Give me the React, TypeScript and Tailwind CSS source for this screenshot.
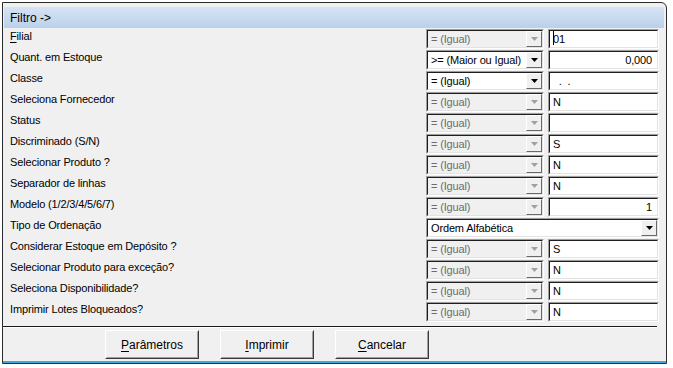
import React from 'react';

type Row = {
  label: string;
  underline?: number;
  op?: string;
  opEnabled?: boolean;
  value?: string;
  align?: 'left' | 'right';
  full?: string;
  caret?: boolean;
};

const rows: Row[] = [
  { label: 'Filial', underline: 0, op: '= (Igual)', value: '01', caret: true },
  { label: 'Quant. em Estoque', op: '>= (Maior ou Igual)', opEnabled: true, value: '0,000', align: 'right' },
  { label: 'Classe', op: '= (Igual)', opEnabled: true, value: '\u00a0\u00a0.\u00a0\u00a0.' },
  { label: 'Seleciona Fornecedor', op: '= (Igual)', value: 'N' },
  { label: 'Status', op: '= (Igual)', value: '' },
  { label: 'Discriminado (S/N)', op: '= (Igual)', value: 'S' },
  { label: 'Selecionar Produto ?', op: '= (Igual)', value: 'N' },
  { label: 'Separador de linhas', op: '= (Igual)', value: 'N' },
  { label: 'Modelo (1/2/3/4/5/6/7)', op: '= (Igual)', value: '1', align: 'right' },
  { label: 'Tipo de Ordenação', full: 'Ordem Alfabética' },
  { label: 'Considerar Estoque em Depósito ?', op: '= (Igual)', value: 'S' },
  { label: 'Selecionar Produto para exceção?', op: '= (Igual)', value: 'N' },
  { label: 'Seleciona Disponibilidade?', op: '= (Igual)', value: 'N' },
  { label: 'Imprimir Lotes Bloqueados?', op: '= (Igual)', value: 'N' },
];

const font = { fontFamily: '"Liberation Sans", Arial, sans-serif' };

function Sunken({ className, children, bg }: { className: string; children?: React.ReactNode; bg: string }) {
  return (
    <div className={`${className} border-t border-l border-[#a0a0a0] border-b border-r border-b-white border-r-white`}>
      <div className={`h-full border-t border-l border-[#1e1e1e] border-b border-r border-b-[#e3e3e3] border-r-[#e3e3e3] ${bg} flex items-center overflow-hidden`}>
        {children}
      </div>
    </div>
  );
}

function DropButton({ disabled }: { disabled?: boolean }) {
  return (
    <div className="ml-auto h-[16px] w-[16px] shrink-0 bg-[#f0f0f0] border-t border-l border-white border-b border-r border-b-[#696969] border-r-[#696969] flex items-center justify-center">
      <svg width="7" height="4" viewBox="0 0 7 4">
        <path d="M0 0h7L3.5 4z" fill={disabled ? '#a0a0a0' : '#000'} />
      </svg>
    </div>
  );
}

function Label({ text, underline }: { text: string; underline?: number }) {
  if (underline === undefined) return <>{text}</>;
  return (
    <>
      {text.slice(0, underline)}
      <span className="underline underline-offset-[2px]">{text[underline]}</span>
      {text.slice(underline + 1)}
    </>
  );
}

function Button({ text, underline }: { text: string; underline: number }) {
  return (
    <div className="w-[94px] h-[29px] border border-t-white border-l-white border-b-[#3a3a3a] border-r-[#3a3a3a] bg-[#f0f0f0]">
      <div className="h-full border border-t-[#f0f0f0] border-l-[#f0f0f0] border-b-[#a0a0a0] border-r-[#a0a0a0] flex items-center justify-center text-[12px] text-black">
        <Label text={text} underline={underline} />
      </div>
    </div>
  );
}

export default function App() {
  return (
    <div className="w-[673px] h-[368px] bg-white" style={font}>
      <div className="ml-[2px] pt-[2px]">
        <div className="w-[665px] h-[362px] bg-[#f0f0f0] border border-[#2c2c2c] rounded-tr-[6px] flex flex-col">
          <div className="flex-1 flex flex-col border-b-2 border-[#3fa8de]">
            <div className="mt-[4px] ml-[1px] mr-[2px] h-[21px] bg-gradient-to-b from-[#d6e4f4] to-[#bad0ea] pl-[6px] flex items-center text-[12px] text-black">
              Filtro -&gt;
            </div>
            <div className="flex flex-col">
              {rows.map((r) => (
                <div key={r.label} className="h-[21px] flex items-start text-[11px] tracking-[-0.15px]">
                  <div className="w-[423px] pl-[7px] pt-[1px] leading-[14px] text-black whitespace-nowrap">
                    <Label text={r.label} underline={r.underline} />
                  </div>
                  {r.full ? (
                    <Sunken className="mt-[1px] w-[233px] h-[20px]" bg="bg-white">
                      <span className="pl-[3px] text-black whitespace-nowrap">{r.full}</span>
                      <DropButton />
                    </Sunken>
                  ) : (
                    <>
                      <Sunken className="mt-[1px] w-[118px] h-[20px]" bg={r.opEnabled ? 'bg-white' : 'bg-[#f0f0f0]'}>
                        <span className={`pl-[3px] whitespace-nowrap ${r.opEnabled ? 'text-black' : 'text-[#6d6d6d]'}`}>{r.op}</span>
                        <DropButton disabled={!r.opEnabled} />
                      </Sunken>
                      <Sunken className="mt-[1px] ml-[4px] w-[111px] h-[20px]" bg="bg-white">
                        <span
                          className={`relative flex-1 px-[3px] text-black whitespace-nowrap ${r.align === 'right' ? 'text-right pr-[5px]' : 'text-left'}`}
                        >
                          {r.caret && <span className="absolute left-[3px] top-[-1px] h-[15px] w-[1px] bg-black" />}
                          {r.value}
                        </span>
                      </Sunken>
                    </>
                  )}
                </div>
              ))}
            </div>
            <div className="mt-[4px] ml-0 w-[654px] h-[2px] border-t border-[#1a1a1a] border-b border-b-white" />
            <div className="mt-[2px] flex pl-[102px] gap-[21px]">
              <Button text="Parâmetros" underline={0} />
              <Button text="Imprimir" underline={0} />
              <Button text="Cancelar" underline={0} />
            </div>
          </div>
        </div>
      </div>
    </div>
  );
}
